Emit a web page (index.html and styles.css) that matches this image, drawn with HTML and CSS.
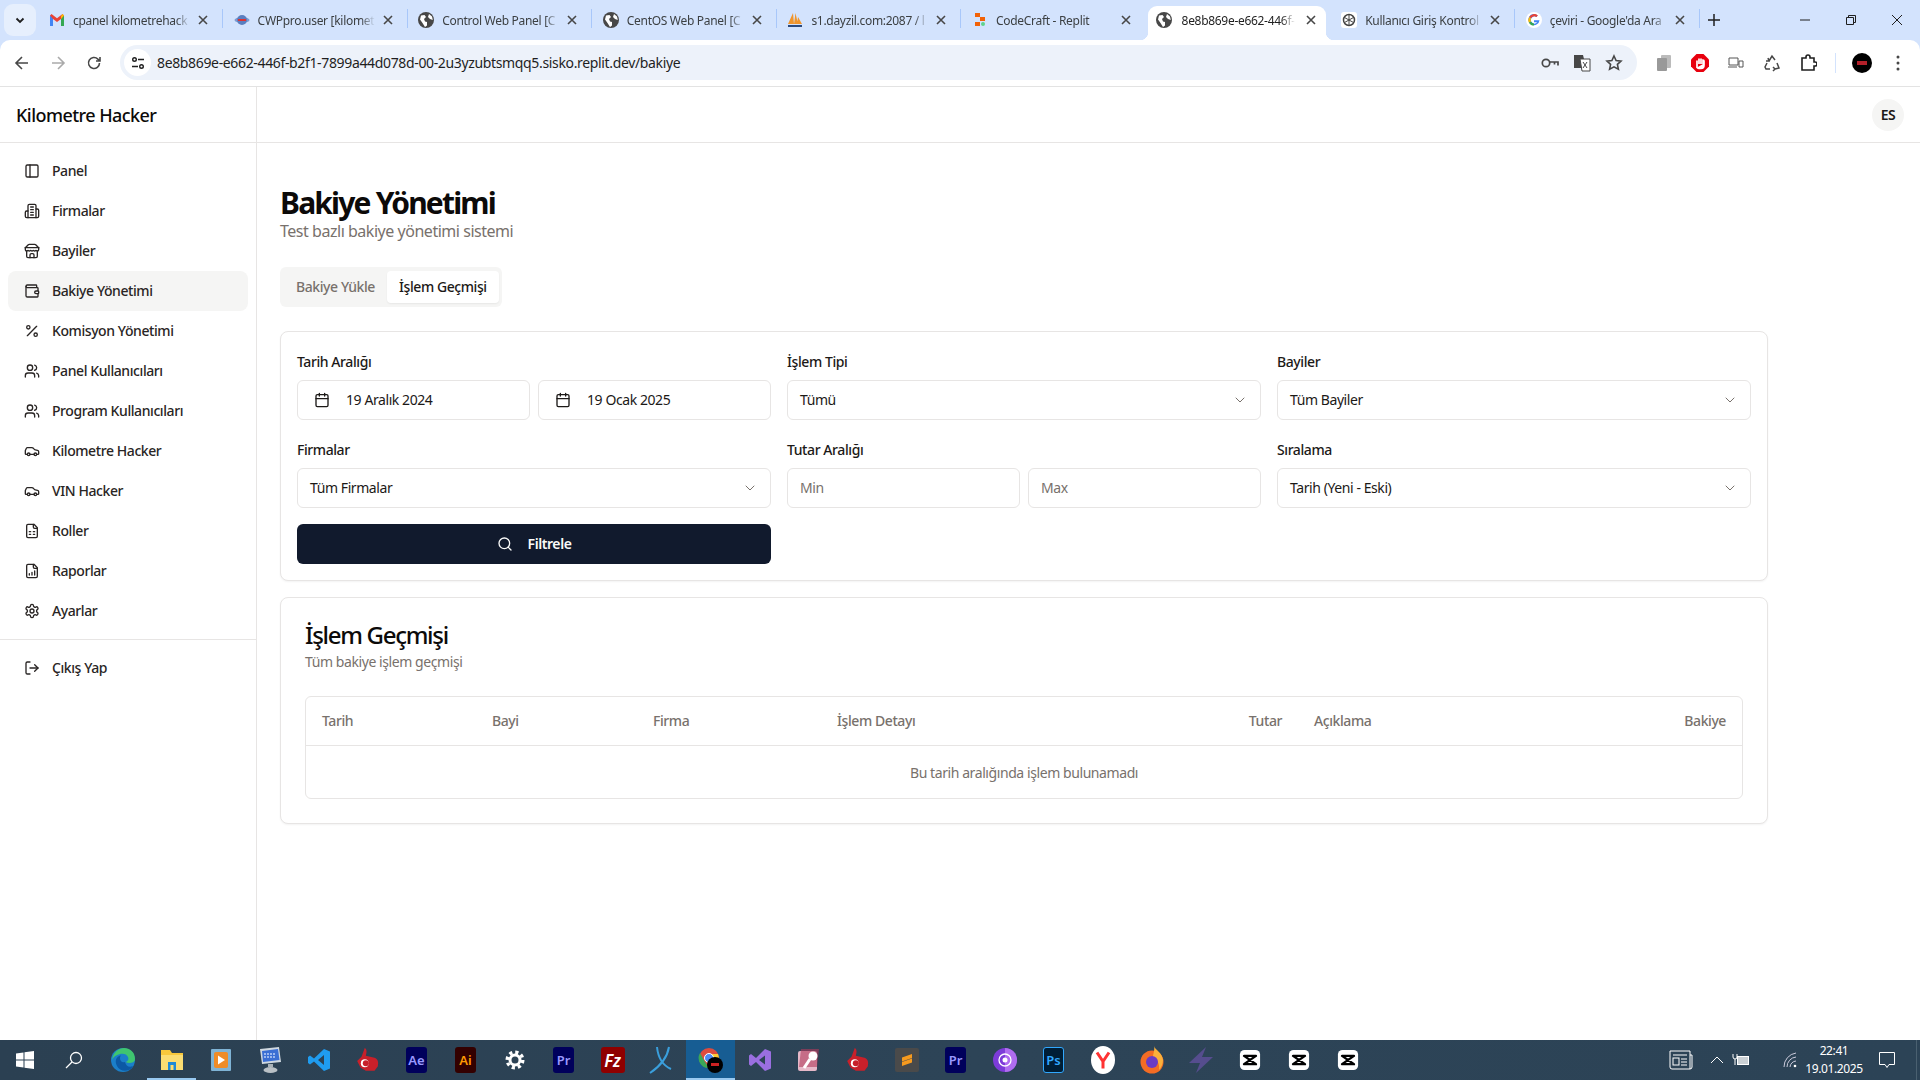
FILE: index.html
```html
<!DOCTYPE html>
<html lang="tr">
<head>
  <meta charset="UTF-8">
  <meta name="viewport" content="width=device-width, initial-scale=1.0">
  <title>Kilometre Hacker</title>
  <link rel="stylesheet" href="styles.css">
</head>
<body>

  <svg class="sprite" width="0" height="0">
    <symbol id="i-panel" viewBox="0 0 24 24"><rect x="3" y="3" width="18" height="18" rx="2"/><path d="M9 3v18"/></symbol>
    <symbol id="i-building" viewBox="0 0 24 24"><path d="M6 22V4a2 2 0 0 1 2-2h8a2 2 0 0 1 2 2v18Z"/><path d="M6 12H4a2 2 0 0 0-2 2v6a2 2 0 0 0 2 2h2"/><path d="M18 9h2a2 2 0 0 1 2 2v9a2 2 0 0 1-2 2h-2"/><path d="M10 6h4M10 10h4M10 14h4M10 18h4"/></symbol>
    <symbol id="i-store" viewBox="0 0 24 24"><path d="m2 7 4.41-4.41A2 2 0 0 1 7.83 2h8.34a2 2 0 0 1 1.42.59L22 7"/><path d="M4 12v8a2 2 0 0 0 2 2h12a2 2 0 0 0 2-2v-8"/><path d="M15 22v-4a2 2 0 0 0-2-2h-2a2 2 0 0 0-2 2v4"/><path d="M2 7h20"/><path d="M22 7v3a2 2 0 0 1-2 2a2.7 2.7 0 0 1-1.59-.63.7.7 0 0 0-.82 0A2.7 2.7 0 0 1 16 12a2.7 2.7 0 0 1-1.59-.63.7.7 0 0 0-.82 0A2.7 2.7 0 0 1 12 12a2.7 2.7 0 0 1-1.59-.63.7.7 0 0 0-.82 0A2.7 2.7 0 0 1 8 12a2.7 2.7 0 0 1-1.59-.63.7.7 0 0 0-.82 0A2.7 2.7 0 0 1 4 12a2 2 0 0 1-2-2V7"/></symbol>
    <symbol id="i-wallet" viewBox="0 0 24 24"><path d="M19 7V4a1 1 0 0 0-1-1H5a2 2 0 0 0 0 4h15a1 1 0 0 1 1 1v4h-3a2 2 0 0 0 0 4h3a1 1 0 0 0 1-1v-2a1 1 0 0 0-1-1"/><path d="M3 5v14a2 2 0 0 0 2 2h15a1 1 0 0 0 1-1v-4"/></symbol>
    <symbol id="i-percent" viewBox="0 0 24 24"><path d="M19 5 5 19"/><circle cx="6.5" cy="6.5" r="2.5"/><circle cx="17.5" cy="17.5" r="2.5"/></symbol>
    <symbol id="i-users" viewBox="0 0 24 24"><path d="M16 21v-2a4 4 0 0 0-4-4H6a4 4 0 0 0-4 4v2"/><circle cx="9" cy="7" r="4"/><path d="M22 21v-2a4 4 0 0 0-3-3.87"/><path d="M16 3.13a4 4 0 0 1 0 7.75"/></symbol>
    <symbol id="i-car" viewBox="0 0 24 24"><path d="M19 17h2c.6 0 1-.4 1-1v-3c0-.9-.7-1.7-1.5-1.9C18.7 10.6 16 10 16 10s-1.3-1.4-2.2-2.3c-.5-.4-1.1-.7-1.8-.7H5c-.6 0-1.1.4-1.4.9l-1.4 2.9A3.7 3.7 0 0 0 2 12v4c0 .6.4 1 1 1h2"/><circle cx="7" cy="17" r="2"/><path d="M9 17h6"/><circle cx="17" cy="17" r="2"/></symbol>
    <symbol id="i-file-grid" viewBox="0 0 24 24"><path d="M15 2H6a2 2 0 0 0-2 2v16a2 2 0 0 0 2 2h12a2 2 0 0 0 2-2V7Z"/><path d="M14 2v4a2 2 0 0 0 2 2h4"/><path d="M8 13h2M14 13h2M8 17h2M14 17h2"/></symbol>
    <symbol id="i-file-chart" viewBox="0 0 24 24"><path d="M15 2H6a2 2 0 0 0-2 2v16a2 2 0 0 0 2 2h12a2 2 0 0 0 2-2V7Z"/><path d="M14 2v4a2 2 0 0 0 2 2h4"/><path d="M8 18v-2M12 18v-4M16 18v-6"/></symbol>
    <symbol id="i-gear" viewBox="0 0 24 24"><path d="M12.22 2h-.44a2 2 0 0 0-2 2v.18a2 2 0 0 1-1 1.73l-.43.25a2 2 0 0 1-2 0l-.15-.08a2 2 0 0 0-2.73.73l-.22.38a2 2 0 0 0 .73 2.73l.15.1a2 2 0 0 1 1 1.72v.51a2 2 0 0 1-1 1.74l-.15.09a2 2 0 0 0-.73 2.73l.22.38a2 2 0 0 0 2.73.73l.15-.08a2 2 0 0 1 2 0l.43.25a2 2 0 0 1 1 1.73V20a2 2 0 0 0 2 2h.44a2 2 0 0 0 2-2v-.18a2 2 0 0 1 1-1.73l.43-.25a2 2 0 0 1 2 0l.15.08a2 2 0 0 0 2.73-.73l.22-.39a2 2 0 0 0-.73-2.73l-.15-.08a2 2 0 0 1-1-1.74v-.5a2 2 0 0 1 1-1.74l.15-.09a2 2 0 0 0 .73-2.73l-.22-.38a2 2 0 0 0-2.73-.73l-.15.08a2 2 0 0 1-2 0l-.43-.25a2 2 0 0 1-1-1.73V4a2 2 0 0 0-2-2z"/><circle cx="12" cy="12" r="3"/></symbol>
    <symbol id="i-logout" viewBox="0 0 24 24"><path d="M9 21H5a2 2 0 0 1-2-2V5a2 2 0 0 1 2-2h4"/><path d="m16 17 5-5-5-5"/><path d="M21 12H9"/></symbol>
    <symbol id="i-calendar" viewBox="0 0 24 24"><rect x="3" y="4" width="18" height="18" rx="2"/><path d="M16 2v4M8 2v4M3 10h18"/></symbol>
    <symbol id="i-chevron" viewBox="0 0 24 24"><path d="m6 9 6 6 6-6"/></symbol>
    <symbol id="i-search" viewBox="0 0 24 24"><circle cx="11" cy="11" r="8"/><path d="m21 21-4.3-4.3"/></symbol>
    <symbol id="f-globe" viewBox="0 0 16 16"><circle cx="8" cy="8" r="8" fill="#474747"/><path d="M3 3.5 6.5 3 8 5 6 7l1 2.500 2 .5v3.500L7 15 4.500 11 2 7.500zM11 2l3 2.500.8 3.500-2.800-1-2-2z" fill="#fff"/></symbol>
    <symbol id="x-close" viewBox="0 0 16 16"><path d="m4 4 8 8M12 4l-8 8" fill="none" stroke="#474747" stroke-width="1.600"/></symbol>
    <symbol id="t-capcut" viewBox="0 0 24 24"><rect x="1" y="1" width="22" height="22" rx="5" fill="#fff"/><path d="M5.500 7.500h13L5.500 16.500h13z" fill="none" stroke="#000" stroke-width="2.600" stroke-linejoin="round"/></symbol>
    <symbol id="t-turk" viewBox="0 0 24 24"><path d="M9 1c2 1 2 4 1 7l8 2c3 1 4 4 3 8l-3 4-8 0-5-3-3-6 4-4z" fill="#c8202a"/><circle cx="9" cy="15" r="3.600" fill="#fff"/><circle cx="10" cy="15" r="2.800" fill="#c8202a"/></symbol>
  </svg>

  <div class="browser">
    <div class="tabstrip">
      <button class="tab-search"><svg width="12" height="12" viewBox="0 0 12 12"><path d="m2.500 4.500 3.500 3.500 3.500-3.500" fill="none" stroke="#1f1f1f" stroke-width="1.800"/></svg></button>

      <div class="tab sep">
        <svg class="favicon" viewBox="0 0 16 16"><path d="M1 3.500V14h3V7l4 3 4-3v7h3V3.500L13.500 2 8 6.200 2.500 2z" fill="#ea4335"/><path d="M1 3.500V14h3V7z" fill="#4285f4"/><path d="M15 3.500V14h-3V7z" fill="#34a853"/><path d="M12 7V4l1.500-2L15 3.500z" fill="#fbbc04"/></svg>
        <span class="tab-title">cpanel kilometrehack</span>
        <svg class="tab-close"><use href="#x-close"/></svg>
      </div>
      <div class="tab sep">
        <svg class="favicon" viewBox="0 0 16 16"><ellipse cx="8" cy="8" rx="7.500" ry="3" fill="#7d9bd1"/><circle cx="8" cy="8" r="5" fill="#5b7fc0"/><path d="M4 8h8" stroke="#d33" stroke-width="2"/></svg>
        <span class="tab-title">CWPpro.user [kilomet</span>
        <svg class="tab-close"><use href="#x-close"/></svg>
      </div>
      <div class="tab sep">
        <svg class="favicon"><use href="#f-globe"/></svg>
        <span class="tab-title">Control Web Panel [C</span>
        <svg class="tab-close"><use href="#x-close"/></svg>
      </div>
      <div class="tab sep">
        <svg class="favicon"><use href="#f-globe"/></svg>
        <span class="tab-title">CentOS Web Panel [C</span>
        <svg class="tab-close"><use href="#x-close"/></svg>
      </div>
      <div class="tab sep">
        <svg class="favicon" viewBox="0 0 16 16"><path d="M1 12 6 1l1 11zM7 12l1.500-11L11 12zM10 12l1-7 4 7z" fill="#f0952c"/><path d="M1 13h14v2H1z" fill="#2b4a7e"/></svg>
        <span class="tab-title">s1.dayzil.com:2087 / l</span>
        <svg class="tab-close"><use href="#x-close"/></svg>
      </div>
      <div class="tab">
        <svg class="favicon" viewBox="0 0 16 16"><rect x="3" y="1" width="5" height="4" fill="#f26207"/><rect x="8" y="5" width="5" height="4" fill="#f26207"/><rect x="3" y="10" width="5" height="4" fill="#f26207"/><circle cx="11" cy="12" r="2" fill="#5fd38d"/></svg>
        <span class="tab-title">CodeCraft - Replit</span>
        <svg class="tab-close"><use href="#x-close"/></svg>
      </div>
      <div class="tab tab-active">
        <svg class="favicon"><use href="#f-globe"/></svg>
        <span class="tab-title">8e8b869e-e662-446f-</span>
        <svg class="tab-close"><use href="#x-close"/></svg>
      </div>
      <div class="tab sep">
        <svg class="favicon" viewBox="0 0 16 16"><rect width="16" height="16" rx="3" fill="#fff"/><circle cx="8" cy="8" r="5.500" fill="none" stroke="#444" stroke-width="1.500"/><path d="M8 3v10M3.500 5.500l9 5M12.500 5.500l-9 5" stroke="#444" stroke-width="1"/></svg>
        <span class="tab-title">Kullanıcı Giriş Kontrol</span>
        <svg class="tab-close"><use href="#x-close"/></svg>
      </div>
      <div class="tab sep">
        <svg class="favicon" viewBox="0 0 16 16"><circle cx="8" cy="8" r="8" fill="#fff"/><path d="M13.500 8.200H8v2h3.200A3.500 3.500 0 1 1 10.300 5l1.500-1.500A5.600 5.600 0 1 0 13.500 8.200z" fill="#4285f4"/><path d="M3.200 5A5.600 5.600 0 0 1 11.800 3.500L10.300 5A3.500 3.500 0 0 0 5 6.300z" fill="#ea4335"/><path d="M2.800 10.500 5 9.400a3.500 3.500 0 0 0 3 2.100v2.100a5.600 5.600 0 0 1-5.200-3.100z" fill="#34a853"/><path d="M3.200 5 5 6.300a3.500 3.500 0 0 0 0 3.100l-2.200 1.100a5.600 5.600 0 0 1 .4-5.500z" fill="#fbbc04"/></svg>
        <span class="tab-title">çeviri - Google'da Ara</span>
        <svg class="tab-close"><use href="#x-close"/></svg>
      </div>

      <svg class="new-tab" width="14" height="14" viewBox="0 0 14 14"><path d="M7 1v12M1 7h12" stroke="#1f1f1f" stroke-width="1.500"/></svg>

      <div class="window-btns">
        <svg width="12" height="12" viewBox="0 0 12 12"><path d="M1 6h10" stroke="#1f1f1f"/></svg>
        <svg width="12" height="12" viewBox="0 0 12 12"><path d="M1.500 3.500h7v7h-7zM3.500 3.500v-2h7v7h-2" fill="none" stroke="#1f1f1f"/></svg>
        <svg width="12" height="12" viewBox="0 0 12 12"><path d="m1 1 10 10M11 1 1 11" stroke="#1f1f1f"/></svg>
      </div>
    </div>

    <div class="toolbar">
      <div class="tool"><svg width="16" height="16" viewBox="0 0 16 16" fill="none" stroke="#474747" stroke-width="1.600"><path d="M14 8H2.500M8 2 2 8l6 6"/></svg></div>
      <div class="tool"><svg width="16" height="16" viewBox="0 0 16 16" fill="none" stroke="#aaa" stroke-width="1.600"><path d="M2 8h11.500M8 2l6 6-6 6"/></svg></div>
      <div class="tool"><svg width="16" height="16" viewBox="0 0 16 16" fill="none" stroke="#474747" stroke-width="1.600"><path d="M13.500 8a5.500 5.500 0 1 1-1.600-3.900L14 6M14 2v4h-4"/></svg></div>

      <div class="addressbar">
        <span class="site-info"><svg width="16" height="16" viewBox="0 0 16 16" fill="none" stroke="#1f1f1f" stroke-width="1.400"><circle cx="4.500" cy="4.500" r="1.800"/><path d="M8 4.500h6M2 11.500h6"/><circle cx="11.500" cy="11.500" r="1.800"/></svg></span>
        <span class="url">8e8b869e-e662-446f-b2f1-7899a44d078d-00-2u3yzubtsmqq5.sisko.replit.dev/bakiye</span>
        <div class="address-icons">
          <svg width="18" height="18" viewBox="0 0 18 18" fill="none" stroke="#474747" stroke-width="1.700"><circle cx="5" cy="9" r="3.700"/><path d="M8.700 8h8.300v3.500M13.500 8v2.500"/></svg>
          <svg width="18" height="18" viewBox="0 0 18 18"><path d="M1 1h9l1 4v9H1z" fill="#474747"/><path d="M7 5h10v12H9z" fill="#fff" stroke="#474747"/><path d="M10 8l4 6M14 8l-4 6" stroke="#474747"/></svg>
          <svg width="18" height="18" viewBox="0 0 18 18" fill="none" stroke="#474747" stroke-width="1.600"><path d="m9 2 2.100 4.500 4.900.6-3.600 3.300 1 4.800L9 12.800l-4.400 2.400 1-4.800L2 7.100l4.900-.6z"/></svg>
        </div>
      </div>

      <div class="ext-icons">
        <div class="tool"><svg width="16" height="18" viewBox="0 0 16 18"><rect x="5" y="1" width="10" height="13" rx="1" fill="#bbb"/><rect x="1" y="4" width="10" height="13" rx="1" fill="#999"/></svg></div>
        <div class="tool"><svg width="18" height="18" viewBox="0 0 18 18"><path d="M5.500 0h7L18 5.500v7L12.500 18h-7L0 12.500v-7z" fill="#e8000e"/><path d="M6 14V6.500M8 10V4.500M10 10V4.500M12 10V6c1 0 1 0 1 1v4c0 2-1 3.500-3 3.500H8c-1 0-2-1-2-1" fill="#fff" stroke="#fff" stroke-width="1.700"/></svg></div>
        <div class="tool"><svg width="16" height="16" viewBox="0 0 16 16" fill="none" stroke="#555"><path d="M1 3h9v7H1zM0 12h9M11 6h4v6h-4z"/></svg></div>
        <div class="tool"><svg width="16" height="18" viewBox="0 0 16 18" fill="none" stroke="#474747" stroke-width="1.500"><path d="m5 7 3-5 3 4M13 9l2 5-4 1M6 15H2l-1-2 2-4M9 13l2 2-2 2M4 4l1 3-3 0"/></svg></div>
        <div class="tool"><svg width="17" height="17" viewBox="0 0 17 17" fill="none" stroke="#1f1f1f" stroke-width="1.600"><path d="M2 4h4V3a2 2 0 0 1 4 0v1h4v4h1a2 2 0 0 1 0 4h-1v4H2z"/></svg></div>
      </div>
      <span class="toolbar-sep"></span>
      <div class="tool profile"><span class="profile-pic"><span class="profile-mark"></span></span></div>
      <div class="tool"><svg width="4" height="16" viewBox="0 0 4 16" fill="#474747"><circle cx="2" cy="2" r="1.500"/><circle cx="2" cy="8" r="1.500"/><circle cx="2" cy="14" r="1.500"/></svg></div>
    </div>
  </div>

  <div class="app">
    <aside class="sidebar">
      <div class="brand">Kilometre Hacker</div>
      <nav class="nav">
        <a class="nav-item"><svg class="icon"><use href="#i-panel"/></svg>Panel</a>
        <a class="nav-item"><svg class="icon"><use href="#i-building"/></svg>Firmalar</a>
        <a class="nav-item"><svg class="icon"><use href="#i-store"/></svg>Bayiler</a>
        <a class="nav-item active"><svg class="icon"><use href="#i-wallet"/></svg>Bakiye Yönetimi</a>
        <a class="nav-item"><svg class="icon"><use href="#i-percent"/></svg>Komisyon Yönetimi</a>
        <a class="nav-item"><svg class="icon"><use href="#i-users"/></svg>Panel Kullanıcıları</a>
        <a class="nav-item"><svg class="icon"><use href="#i-users"/></svg>Program Kullanıcıları</a>
        <a class="nav-item"><svg class="icon"><use href="#i-car"/></svg>Kilometre Hacker</a>
        <a class="nav-item"><svg class="icon"><use href="#i-car"/></svg>VIN Hacker</a>
        <a class="nav-item"><svg class="icon"><use href="#i-file-grid"/></svg>Roller</a>
        <a class="nav-item"><svg class="icon"><use href="#i-file-chart"/></svg>Raporlar</a>
        <a class="nav-item"><svg class="icon"><use href="#i-gear"/></svg>Ayarlar</a>
      </nav>
      <div class="nav nav-bottom">
        <a class="nav-item"><svg class="icon"><use href="#i-logout"/></svg>Çıkış Yap</a>
      </div>
    </aside>

    <div class="content">
      <header class="topbar"><span class="avatar">ES</span></header>
      <main class="main">
        <h1 class="page-title">Bakiye Yönetimi</h1>
        <p class="page-sub">Test bazlı bakiye yönetimi sistemi</p>

        <div class="tabs">
          <span class="tabs-item">Bakiye Yükle</span>
          <span class="tabs-item selected">İşlem Geçmişi</span>
        </div>

        <section class="card filter-card">
          <div class="filter-grid">
            <div class="field">
              <label class="field-label">Tarih Aralığı</label>
              <div class="field-pair">
                <div class="control date"><svg class="icon"><use href="#i-calendar"/></svg>19 Aralık 2024</div>
                <div class="control date"><svg class="icon"><use href="#i-calendar"/></svg>19 Ocak 2025</div>
              </div>
            </div>
            <div class="field">
              <label class="field-label">İşlem Tipi</label>
              <div class="control select">Tümü<svg class="icon chevron"><use href="#i-chevron"/></svg></div>
            </div>
            <div class="field">
              <label class="field-label">Bayiler</label>
              <div class="control select">Tüm Bayiler<svg class="icon chevron"><use href="#i-chevron"/></svg></div>
            </div>
            <div class="field">
              <label class="field-label">Firmalar</label>
              <div class="control select">Tüm Firmalar<svg class="icon chevron"><use href="#i-chevron"/></svg></div>
            </div>
            <div class="field">
              <label class="field-label">Tutar Aralığı</label>
              <div class="field-pair">
                <div class="control placeholder">Min</div>
                <div class="control placeholder">Max</div>
              </div>
            </div>
            <div class="field">
              <label class="field-label">Sıralama</label>
              <div class="control select">Tarih (Yeni - Eski)<svg class="icon chevron"><use href="#i-chevron"/></svg></div>
            </div>
            <button class="filter-btn"><svg class="icon"><use href="#i-search"/></svg>Filtrele</button>
          </div>
        </section>

        <section class="card history-card">
          <h2 class="card-title">İşlem Geçmişi</h2>
          <p class="card-sub">Tüm bakiye işlem geçmişi</p>
          <div class="table-wrap">
            <table class="table">
              <colgroup>
                <col class="col-date"><col class="col-dealer"><col class="col-firm"><col class="col-detail"><col class="col-note">
              </colgroup>
              <thead>
                <tr><th>Tarih</th><th>Bayi</th><th>Firma</th><th class="split"><span>İşlem Detayı</span><span>Tutar</span></th><th class="split"><span>Açıklama</span><span>Bakiye</span></th></tr>
              </thead>
              <tbody>
                <tr><td colspan="5" class="empty">Bu tarih aralığında işlem bulunamadı</td></tr>
              </tbody>
            </table>
          </div>
        </section>
      </main>
    </div>
  </div>

  <footer class="taskbar">
    <div class="task"><svg width="20" height="20" viewBox="0 0 20 20" fill="#fff"><path d="M1 3.500 8.500 2.400v7H1zM9.500 2.300 19 1v8.400H9.500zM1 10.500h7.500v7.100L1 16.500zM9.500 10.500H19V19l-9.500-1.300z"/></svg></div>
    <div class="task"><svg width="18" height="18" viewBox="0 0 18 18" fill="none" stroke="#fff" stroke-width="1.300"><circle cx="11" cy="7" r="5.500"/><path d="M7 11 1 17"/></svg></div>
    <div class="task"><svg width="26" height="26" viewBox="0 0 26 26"><circle cx="13" cy="13" r="12" fill="#1b7fc9"/><path d="M2 13C3 5 9 1 14 1c6 0 11 4 11 11 0 3-3 4-6 4-2 0-3-1-3-1 2-1 3-3 2-5-1-3-5-4-8-3-4 1-7 3-8 6z" fill="#3fc56f"/><path d="M15 15c-3 1-5-1-5-4 0-1 .5-2 1-2.500C7 9 4 13 7 19c2 4 7 6 12 4 2-1 3-2 4-4-4 2-7 0-8-4z" fill="#0c59a4"/></svg></div>
    <div class="task underlined"><svg width="24" height="22" viewBox="0 0 24 22"><path d="M1 1h9l2 3h11v17H1z" fill="#f8c83c"/><path d="M1 6h22v15H1z" fill="#fbdd72"/><path d="M8 13h8v8H8z" fill="#1e8ad6"/><path d="M10.500 16h3v5h-3z" fill="#fbdd72"/></svg></div>
    <div class="task"><svg width="22" height="24" viewBox="0 0 22 24"><rect x="1" y="1" width="20" height="22" rx="1" fill="#7fb3d5"/><rect x="4" y="4" width="14" height="16" rx="2" fill="#ee8c28"/><path d="M8 7.500v9l7-4.500z" fill="#fff"/></svg></div>
    <div class="task"><svg width="24" height="28" viewBox="0 0 24 28"><path d="M2 3 21 1l2 15L4 18z" fill="#cfd8e0"/><path d="M4 5 20 3l1.500 11L5 16z" fill="#3b6fd4"/><path d="M6 8h12M6 11h12" stroke="#bcd0f5" stroke-width="1.500" stroke-dasharray="2 1"/><path d="M10 18h5v3h-5z" fill="#a9b2b8"/><ellipse cx="12.500" cy="24" rx="7" ry="3" fill="#b9c0c5"/></svg></div>
    <div class="task"><svg width="24" height="30" viewBox="0 0 24 24"><path d="M17 1 7 10.500 3 7.500 1 9v6l2 1.500 4-3L17 23l6-2.500v-17zM17 7v10l-6-5z" fill="#1f9cf0"/></svg></div>
    <div class="task"><svg width="26" height="30"><use href="#t-turk"/></svg></div>
    <div class="task"><span class="app-tile tile-ae">Ae</span></div>
    <div class="task"><span class="app-tile tile-ai">Ai</span></div>
    <div class="task"><svg width="20" height="20" viewBox="0 0 20 20" fill="none" stroke="#fff"><circle cx="10" cy="10" r="5" stroke-width="3"/><circle cx="10" cy="10" r="7.800" stroke-width="3.400" stroke-dasharray="3.200 2.926"/></svg></div>
    <div class="task"><span class="app-tile tile-pr">Pr</span></div>
    <div class="task"><span class="app-tile tile-fz">Fz</span></div>
    <div class="task"><svg width="26" height="30" viewBox="0 0 26 30" fill="none" stroke="#3a9fdc" stroke-width="2"><path d="M8 2c1 10 5 18 14 22M20 2C18 14 10 22 1 28"/></svg></div>
    <div class="task running"><svg width="26" height="26" viewBox="0 0 26 26"><circle cx="11" cy="11" r="10" fill="#dd4b3e"/><path d="M11 21A10 10 0 0 1 2 6l5 9z" fill="#3aa757"/><path d="M11 21a10 10 0 0 0 9-14h-9l4 8z" fill="#fcc934"/><circle cx="11" cy="11" r="4.500" fill="#4c8bf5" stroke="#fff"/><circle cx="17" cy="18" r="8" fill="#000"/><rect x="13" y="16" width="8" height="3" fill="#c22"/></svg></div>
    <div class="task"><svg width="24" height="30" viewBox="0 0 24 24"><path d="M17 1 8 10 3 6 1 7.500v9L3 18l5-4 9 9 6-2.500v-17zM17 7.500v9L11 12z" fill="#9a6fe0"/></svg></div>
    <div class="task"><svg width="24" height="24" viewBox="0 0 24 24"><rect x="1" y="3" width="19" height="20" rx="2" fill="#e6b8c8"/><path d="M4 1h18l-2 18H2z" fill="#b03a5b" opacity=".6"/><circle cx="16" cy="8" r="4.500" fill="#fff"/><path d="M13 11 7 20" stroke="#fff" stroke-width="3"/></svg></div>
    <div class="task"><svg width="26" height="30"><use href="#t-turk"/></svg></div>
    <div class="task"><svg width="24" height="24" viewBox="0 0 24 24"><rect width="24" height="24" rx="2" fill="#4a4a4a"/><path d="M7 9.500 17 6v4L7 13.500zM7 14l10-3.500v4L7 18z" fill="#f79a1e"/></svg></div>
    <div class="task"><span class="app-tile tile-pr">Pr</span></div>
    <div class="task"><svg width="24" height="24" viewBox="0 0 24 24"><circle cx="12" cy="12" r="12" fill="#7d3bd8"/><path d="M12 0a12 12 0 0 1 0 24z" fill="#b06df0"/><circle cx="12" cy="12" r="6" fill="none" stroke="#fff" stroke-width="1.300"/><circle cx="12" cy="12" r="2.500" fill="#fff"/></svg></div>
    <div class="task"><span class="app-tile tile-ps">Ps</span></div>
    <div class="task"><svg width="24" height="28" viewBox="0 0 24 28"><ellipse cx="12" cy="14" rx="12" ry="14" fill="#fff"/><path d="M6 6.500l6 9v7M18 6.500l-6 9" fill="none" stroke="#f33" stroke-width="3"/></svg></div>
    <div class="task"><svg width="24" height="28" viewBox="0 0 24 28"><circle cx="12" cy="16" r="11.500" fill="#f36c24"/><path d="M14 0c1 4 8 6 9 14 0 4-2 8-4 10 1-6-2-11-6-13C13 8 15 4 14 0z" fill="#fbb03b"/><circle cx="12" cy="16" r="6" fill="#6a3bc4"/></svg></div>
    <div class="task"><svg width="26" height="28" viewBox="0 0 26 28"><path d="M18 1 1 17h11L8 27l17-16H14z" fill="#564d8e"/></svg></div>
    <div class="task"><svg width="22" height="26"><use href="#t-capcut"/></svg></div>
    <div class="task"><svg width="22" height="26"><use href="#t-capcut"/></svg></div>
    <div class="task"><svg width="22" height="26"><use href="#t-capcut"/></svg></div>

    <div class="tray">
      <svg class="tray-news" width="24" height="20" viewBox="0 0 24 20" fill="none" stroke="#fff"><path d="M1 1h20v18H3a2 2 0 0 1-2-2zM21 5h2v12a2 2 0 0 1-2 2"/><path d="M4 5h14"/><rect x="4" y="8" width="6" height="7"/><path d="M12 9h6M12 12h6M12 15h6"/></svg>
      <svg class="tray-caret" width="14" height="14" viewBox="0 0 14 14" fill="none" stroke="#fff"><path d="m1 10 6-6 6 6"/></svg>
      <svg class="tray-power" width="18" height="14" viewBox="0 0 18 14" fill="none" stroke="#fff"><rect x="5.500" y="3.500" width="11" height="8" fill="#fff" fill-opacity=".75"/><path d="M1 1v3a2 2 0 0 0 4 0V1M3 6v6"/></svg>
      <svg class="tray-wifi" width="14" height="16" viewBox="0 0 14 16" fill="none" stroke="#ccd" stroke-width="1"><path d="M1 15A14 14 0 0 1 13 1M4 15A10 10 0 0 1 13 5M7 15a6.500 6.500 0 0 1 6-6"/><circle cx="12" cy="14" r="1.300" fill="#fff" stroke="none"/></svg>
      <div class="clock"><span>22:41</span><span>19.01.2025</span></div>
      <svg class="tray-note" width="18" height="18" viewBox="0 0 18 18" fill="none" stroke="#fff"><path d="M1.500 1.500h15v12H11l-2 3-2-3H1.500z"/></svg>
    </div>
  </footer>

</body>
</html>
```

FILE: styles.css
```css
* {
  box-sizing: border-box;
}

body {
  margin: 0;
  width: 1920px;
  height: 1080px;
  overflow: hidden;
  display: flex;
  flex-direction: column;
  font-family: "Noto Sans", "Open Sans", sans-serif;
  font-size: 14px;
  letter-spacing: -0.42px;
  color: #1c1917;
  background-color: #fff;
}

.sprite {
  position: absolute;
}

/* browser chrome */
.browser {
  background-color: #d3e3fd;
  flex-shrink: 0;
}

.tabstrip {
  height: 40px;
  display: flex;
  padding-left: 40px;
  position: relative;
}

.tab-search {
  position: absolute;
  left: 4px;
  top: 4px;
  width: 32px;
  height: 32px;
  border: 0;
  border-radius: 9px;
  background-color: #e6effd;
  display: flex;
  align-items: center;
  justify-content: center;
  padding: 0;
}

.tab {
  width: 184.6px;
  margin-top: 6px;
  height: 34px;
  padding: 0 0 6px 9px;
  display: flex;
  align-items: center;
  font-size: 12px;
  letter-spacing: -0.3px;
  color: #3c4043;
  position: relative;
  flex-shrink: 0;
}

.tab.sep::after {
  content: "";
  position: absolute;
  left: 182px;
  top: 3px;
  height: 19px;
  width: 1px;
  background-color: #a8c7fa;
}

.tab-active {
  width: 178px;
  margin-right: 6.6px;
  background-color: #fff;
  border-radius: 9px 9px 0 0;
  padding-left: 8px;
  color: #1f1f1f;
}

.tab-active::before,
.tab-active::after {
  content: "";
  position: absolute;
  bottom: 0;
  width: 8px;
  height: 8px;
}

.tab-active::before {
  left: -8px;
  background: radial-gradient(circle at 0 0, #d3e3fd 8px, #fff 8.5px);
}

.tab-active::after {
  right: -8px;
  background: radial-gradient(circle at 100% 0, #d3e3fd 8px, #fff 8.5px);
}

.favicon {
  width: 16px;
  height: 16px;
  flex-shrink: 0;
}

.tab-title {
  width: 117px;
  margin-left: 8px;
  white-space: nowrap;
  overflow: hidden;
  -webkit-mask-image: linear-gradient(to right, #000 88%, transparent);
  mask-image: linear-gradient(to right, #000 88%, transparent);
}

.tab-active .tab-title {
  width: 113px;
  margin-left: 10px;
}

.tab-close {
  width: 16px;
  height: 16px;
  margin-left: 5px;
  flex-shrink: 0;
}

.tab-active .tab-close {
  margin-left: 8px;
}

.new-tab {
  position: absolute;
  left: 1707px;
  top: 13px;
}

.window-btns {
  position: absolute;
  right: 0;
  top: 0;
  display: flex;
  height: 40px;
  align-items: center;
  padding-right: 17px;
  gap: 34px;
}

.toolbar {
  height: 47px;
  background-color: #fff;
  border-radius: 10px 10px 0 0;
  border-bottom: 1px solid #e3e3e3;
  display: flex;
  align-items: center;
  padding: 0 4px 1px;
}

.tool {
  width: 36px;
  height: 36px;
  display: flex;
  align-items: center;
  justify-content: center;
  flex-shrink: 0;
}

.addressbar {
  width: 1517px;
  height: 35px;
  margin-left: 8px;
  background-color: #edf2fa;
  border-radius: 18px;
  display: flex;
  align-items: center;
  padding-left: 4px;
  flex-shrink: 0;
}

.site-info {
  width: 27px;
  height: 27px;
  border-radius: 50%;
  background-color: #fff;
  display: flex;
  align-items: center;
  justify-content: center;
}

.url {
  margin-left: 6px;
  font-size: 14px;
  color: #1f1f1f;
  white-space: nowrap;
  letter-spacing: -0.35px;
}

.address-icons {
  margin-left: auto;
  padding-right: 14px;
  display: flex;
  gap: 14px;
  align-items: center;
}

.ext-icons {
  display: flex;
  margin-left: 9px;
}

.toolbar-sep {
  width: 1px;
  height: 20px;
  margin-left: 9px;
  background-color: #d3e3fd;
}

.profile {
  margin-left: 8px;
}

.profile-pic {
  width: 20px;
  height: 20px;
  border-radius: 50%;
  background-color: #000;
  display: flex;
  align-items: center;
  justify-content: center;
}

.profile-mark {
  width: 10px;
  height: 4px;
  background-color: #b3202a;
}

/* app */
.app {
  flex: 1;
  min-height: 0;
  display: flex;
}

.sidebar {
  width: 257px;
  border-right: 1px solid #e7e5e4;
  flex-shrink: 0;
}

.brand {
  height: 56px;
  padding-left: 16px;
  display: flex;
  align-items: center;
  font-size: 18px;
  letter-spacing: -0.55px;
  font-weight: 500;
  border-bottom: 1px solid #e7e5e4;
  color: #0c0a09;
}

.nav {
  padding: 8px;
}

.nav-bottom {
  border-top: 1px solid #e7e5e4;
}

.nav-item {
  height: 40px;
  display: flex;
  align-items: center;
  gap: 12px;
  padding: 0 0 1px 16px;
  border-radius: 8px;
  font-weight: 500;
  color: #292524;
}

.nav-item.active {
  background-color: #f5f5f4;
}

.icon {
  width: 16px;
  height: 16px;
  flex-shrink: 0;
  fill: none;
  stroke: currentColor;
  stroke-width: 2;
  stroke-linecap: round;
  stroke-linejoin: round;
}

.content {
  flex: 1;
  min-width: 0;
}

.topbar {
  height: 56px;
  border-bottom: 1px solid #e7e5e4;
  display: flex;
  align-items: center;
  justify-content: flex-end;
  padding-right: 16px;
}

.avatar {
  width: 32px;
  height: 32px;
  border-radius: 50%;
  background-color: #f5f5f4;
  display: flex;
  align-items: center;
  justify-content: center;
  font-size: 14px;
  font-weight: 600;
}

.main {
  padding: 42px 0 0 23px;
  width: 1511px;
}

.page-title {
  margin: 0;
  font-size: 30px;
  line-height: 36px;
  letter-spacing: -1.8px;
  font-weight: 700;
  color: #0c0a09;
}

.page-sub {
  margin: -2px 0 0;
  font-size: 16px;
  line-height: 24px;
  letter-spacing: -0.47px;
  color: #78716c;
}

.tabs {
  margin-top: 24px;
  width: 222px;
  height: 40px;
  padding: 4px;
  display: flex;
  background-color: #f5f5f4;
  border-radius: 6px;
  font-weight: 500;
}

.tabs-item {
  padding: 0 12px 1px;
  display: flex;
  align-items: center;
  border-radius: 4px;
  color: #78716c;
  white-space: nowrap;
}

.tabs-item.selected {
  background-color: #fff;
  color: #1c1917;
  box-shadow: 0 1px 2px rgba(0, 0, 0, 0.06);
}

.card {
  border: 1px solid #e7e5e4;
  border-radius: 8px;
  background-color: #fff;
  box-shadow: 0 1px 2px rgba(0, 0, 0, 0.05);
}

.filter-card {
  margin-top: 24px;
  height: 250px;
  padding: 20px 16px 15px;
}

.filter-grid {
  display: grid;
  grid-template-columns: repeat(3, 474px);
  column-gap: 16px;
  row-gap: 20px;
}

.field-label {
  display: block;
  line-height: 20px;
  margin-bottom: 8px;
  font-weight: 500;
}

.field-pair {
  display: flex;
  gap: 8px;
}

.control {
  flex: 1;
  height: 40px;
  border: 1px solid #e7e5e4;
  border-radius: 6px;
  display: flex;
  align-items: center;
  padding: 0 12px 1px;
  background-color: #fff;
}

.control.date {
  padding-left: 16px;
  gap: 16px;
}

.control.select {
  justify-content: space-between;
}

.control.placeholder {
  color: #78716c;
}

.chevron {
  color: #78716c;
  stroke-width: 1.5;
}

.filter-btn {
  height: 40px;
  margin-top: -4px;
  padding: 0 0 1px;
  border: 0;
  border-radius: 6px;
  background-color: #111a2d;
  color: #fafaf9;
  font-family: inherit;
  font-size: 14px;
  letter-spacing: -0.42px;
  font-weight: 600;
  display: flex;
  align-items: center;
  justify-content: center;
  gap: 15px;
}

.history-card {
  margin-top: 16px;
  height: 227px;
  padding: 21px 24px 24px;
}

.card-title {
  margin: 0 0 1px;
  font-size: 24px;
  line-height: 32px;
  letter-spacing: -1.3px;
  font-weight: 500;
  color: #0c0a09;
}

.card-sub {
  margin: 0;
  line-height: 20px;
  color: #78716c;
}

.table-wrap {
  margin-top: 24px;
  border: 1px solid #e7e5e4;
  border-radius: 6px;
  height: 103px;
}

.table {
  width: 100%;
  border-collapse: collapse;
  table-layout: fixed;
}

.col-date { width: 170px; }
.col-dealer { width: 161px; }
.col-firm { width: 184px; }
.col-detail { width: 477px; }

.table th {
  height: 48px;
  padding: 0 16px 1px;
  text-align: left;
  font-weight: 500;
  color: #78716c;
  border-bottom: 1px solid #e7e5e4;
}

.table th.split span {
  display: inline-block;
}

.split {
  white-space: nowrap;
}

.table th.split > span:last-child {
  float: right;
}

.empty {
  height: 53px;
  padding-top: 2px;
  text-align: center;
  color: #78716c;
}

/* taskbar */
.taskbar {
  height: 40px;
  flex-shrink: 0;
  background: linear-gradient(90deg, #2b4052, #2d4457 50%, #2c4356);
  display: flex;
  position: relative;
}

.task {
  width: 49px;
  height: 40px;
  display: flex;
  align-items: center;
  justify-content: center;
  flex-shrink: 0;
}

.task.underlined {
  box-shadow: inset 0 -2px 0 #99c9f0;
}

.task.running {
  background-color: #175d93;
  box-shadow: inset 0 -2px 0 #99c9f0;
}

.app-tile {
  width: 21px;
  height: 26px;
  border-radius: 3px;
  display: flex;
  align-items: center;
  justify-content: center;
  font-size: 13px;
  font-weight: 600;
  letter-spacing: 0;
}

.tile-ae { background-color: #00005b; color: #9999ff; }
.tile-ai { background-color: #330000; color: #ff9a00; }
.tile-pr { background-color: #00005b; color: #9999ff; }
.tile-fz { background-color: #8f0000; color: #fff; width: 24px; font-style: italic; font-size: 17px; }
.tile-ps { background-color: #001e36; color: #31a8ff; border: 1px solid #31a8ff; width: 21px; }

.tray {
  position: absolute;
  left: 1660px;
  top: 0;
  right: 0;
  height: 40px;
  display: flex;
  align-items: center;
  color: #fff;
}

.tray::after {
  content: "";
  position: absolute;
  right: 3px;
  top: 0;
  bottom: 0;
  width: 1px;
  background-color: #4a6070;
}

.tray-news { margin-left: 9px; }
.tray-caret { margin-left: 17px; }
.tray-power { margin-left: 8px; }
.tray-wifi { margin-left: 33px; }

.clock {
  margin-left: 4px;
  width: 66px;
  flex-shrink: 0;
  display: flex;
  flex-direction: column;
  align-items: center;
  font-size: 12px;
  line-height: 18px;
  letter-spacing: -0.4px;
}

.tray-note { margin-left: 11px; }
```
